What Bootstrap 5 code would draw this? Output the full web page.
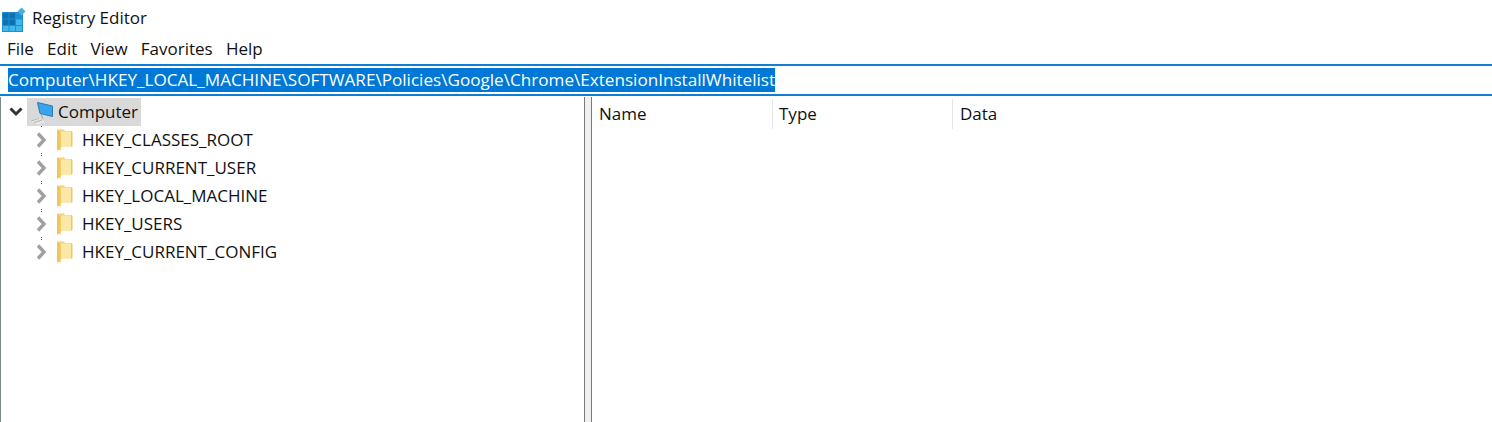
<!DOCTYPE html>
<html lang="en">
<head>
<meta charset="utf-8">
<title>Registry Editor</title>
<link rel="stylesheet" href="https://cdn.jsdelivr.net/npm/bootstrap@5.3.0/dist/css/bootstrap.min.css">
<style>
html,body{height:100%;}
body{font-family:"Open Sans","Noto Sans","Liberation Sans",sans-serif;font-size:17px;color:#111;background:#fff;overflow:hidden;}
.reg-window{height:422px;width:1492px;}
.reg-title{height:36px;padding-left:2px;gap:6px;}
.reg-menu{height:28px;padding-left:7px;gap:13.2px;padding-bottom:2px;}
.reg-addr{height:32px;border-top:2px solid #0f7fd6;border-bottom:2px solid #0f7fd6;padding-left:8px;margin-bottom:1px;}
.reg-sel{background:#0078d7;color:#fff;font-size:17.12px;line-height:24px;height:24px;white-space:nowrap;}
.reg-panes{height:326px;}
.reg-tree{width:584px;border-left:1px solid #7f8794;padding-top:1px;}
.reg-split{width:8px;background:#f0f0f0;border-left:1px solid #7a7a7a;border-right:1px solid #7a7a7a;}
.reg-row{height:28px;white-space:nowrap;}
.reg-chev{width:26px;padding-left:7px;}
.reg-subrow{padding-left:33px;}
.reg-subchev{width:23px;}
.reg-root{background:#d9d9d9;height:28px;padding:0 3px 0 2px;gap:4px;}
.reg-fold{margin-right:9px;}
.reg-cols{height:33px;padding-top:2px;}
.reg-col{padding-left:7px;border-right:1px solid #e5e5e5;height:30px;width:180px;}
.reg-col-first{width:181px;}
.reg-col-mid{padding-left:6px;}
.reg-col-last{border-right:0;}
</style>
</head>
<body>
<svg class="d-none" aria-hidden="true">
  <symbol id="reg-folder" viewBox="0 0 16 22">
    <path d="M0 0.500h7l1 1.500h7v15.500H4V21L0 21.500z" fill="#f5d273"/>
    <path d="M3.500 2.500h11v14.500H4z" fill="#fbe8a6"/>
    <path d="M0 1l3.500 1.500V19L0 21.500z" fill="#f0c55a"/>
    <path d="M14 2.500h1.500v15H14z" fill="#eec766"/>
  </symbol>
  <symbol id="reg-arrow" viewBox="0 0 14 28">
    <path d="M4 7.500l6 6.500-6 6.500" fill="none" stroke="#a0a0a0" stroke-width="3.400"/>
  </symbol>
</svg>
<div class="reg-window d-flex flex-column">
  <div class="reg-title d-flex align-items-center">
    <svg width="24" height="30" viewBox="0 0 24 30" aria-hidden="true">
      <rect x="0" y="9" width="21" height="20" fill="#1f8fd0"/>
      <g fill="#0d72ae"><rect x="1" y="10" width="5.500" height="5.500"/><rect x="7.500" y="10" width="5.500" height="5.500"/><rect x="1" y="16.500" width="5.500" height="5.500"/><rect x="7.500" y="16.500" width="5.500" height="5.500"/></g>
      <g fill="#3fb7ea"><rect x="1" y="23" width="5.500" height="5"/><rect x="7.500" y="23" width="5.500" height="5"/><rect x="14" y="23" width="6" height="5"/><rect x="14" y="16.500" width="6" height="5.500"/></g>
      <path d="M19.500 4.500l4 4-4 4-4-4z" fill="#4badde"/>
    </svg>
    <span>Registry Editor</span>
  </div>
  <nav class="reg-menu d-flex align-items-center">
    <span>File</span><span>Edit</span><span>View</span><span>Favorites</span><span>Help</span>
  </nav>
  <div class="reg-addr d-flex align-items-center">
    <span class="reg-sel">Computer\HKEY_LOCAL_MACHINE\SOFTWARE\Policies\Google\Chrome\ExtensionInstallWhitelist</span>
  </div>
  <div class="reg-panes d-flex flex-grow-1">
    <div class="reg-tree">
      <div class="reg-row d-flex align-items-center">
        <div class="reg-chev d-flex">
          <svg width="16" height="12" viewBox="0 0 16 12" aria-hidden="true"><path d="M2.500 2.500l5.500 5.500 5.500-5.500" fill="none" stroke="#333" stroke-width="3"/></svg>
        </div>
        <div class="reg-root d-flex align-items-center">
          <svg width="25" height="26" viewBox="0 0 25 26" aria-hidden="true">
            <path d="M8.500 3.500l15 3.500v10.500l-12.500-3z" fill="#3aa5ee" stroke="#2a7bb0" stroke-width="1"/>
            <path d="M12 15.500l2 4" stroke="#9aa" stroke-width="1"/>
            <path d="M0 22l9-3 8 4-8 2.500z" fill="#e6e6e6"/>
            <path d="M2 22l8-2.500M5 23.500l8-2.500" stroke="#a8a8a8" stroke-width="0.800"/>
          </svg>
          <span>Computer</span>
        </div>
      </div>
      <div class="reg-row reg-subrow d-flex align-items-center">
        <svg class="reg-subchev" width="14" height="28" viewBox="0 0 23 28" preserveAspectRatio="xMinYMin meet" aria-hidden="true"><use href="#reg-arrow" width="14" height="28"/><path d="M7 0h1v1H7zM7 27h1v1H7z" fill="#555"/></svg>
        <svg class="reg-fold" width="16" height="22" aria-hidden="true"><use href="#reg-folder"/></svg>
        <span>HKEY_CLASSES_ROOT</span>
      </div>
      <div class="reg-row reg-subrow d-flex align-items-center">
        <svg class="reg-subchev" width="14" height="28" viewBox="0 0 23 28" preserveAspectRatio="xMinYMin meet" aria-hidden="true"><use href="#reg-arrow" width="14" height="28"/><path d="M7 1h1v1H7zM7 27h1v1H7z" fill="#555"/></svg>
        <svg class="reg-fold" width="16" height="22" aria-hidden="true"><use href="#reg-folder"/></svg>
        <span>HKEY_CURRENT_USER</span>
      </div>
      <div class="reg-row reg-subrow d-flex align-items-center">
        <svg class="reg-subchev" width="14" height="28" viewBox="0 0 23 28" preserveAspectRatio="xMinYMin meet" aria-hidden="true"><use href="#reg-arrow" width="14" height="28"/><path d="M7 1h1v1H7zM7 27h1v1H7z" fill="#555"/></svg>
        <svg class="reg-fold" width="16" height="22" aria-hidden="true"><use href="#reg-folder"/></svg>
        <span>HKEY_LOCAL_MACHINE</span>
      </div>
      <div class="reg-row reg-subrow d-flex align-items-center">
        <svg class="reg-subchev" width="14" height="28" viewBox="0 0 23 28" preserveAspectRatio="xMinYMin meet" aria-hidden="true"><use href="#reg-arrow" width="14" height="28"/><path d="M7 1h1v1H7zM7 27h1v1H7z" fill="#555"/></svg>
        <svg class="reg-fold" width="16" height="22" aria-hidden="true"><use href="#reg-folder"/></svg>
        <span>HKEY_USERS</span>
      </div>
      <div class="reg-row reg-subrow d-flex align-items-center">
        <svg class="reg-subchev" width="14" height="28" viewBox="0 0 23 28" preserveAspectRatio="xMinYMin meet" aria-hidden="true"><use href="#reg-arrow" width="14" height="28"/><path d="M7 1h1v1H7z" fill="#555"/></svg>
        <svg class="reg-fold" width="16" height="22" aria-hidden="true"><use href="#reg-folder"/></svg>
        <span>HKEY_CURRENT_CONFIG</span>
      </div>
    </div>
    <div class="reg-split"></div>
    <div class="flex-grow-1">
      <div class="reg-cols d-flex">
        <div class="reg-col reg-col-first d-flex align-items-center">Name</div>
        <div class="reg-col reg-col-mid d-flex align-items-center">Type</div>
        <div class="reg-col reg-col-last d-flex align-items-center">Data</div>
      </div>
    </div>
  </div>
</div>
<script src="https://cdn.jsdelivr.net/npm/bootstrap@5.3.0/dist/js/bootstrap.bundle.min.js"></script>
</body>
</html>
